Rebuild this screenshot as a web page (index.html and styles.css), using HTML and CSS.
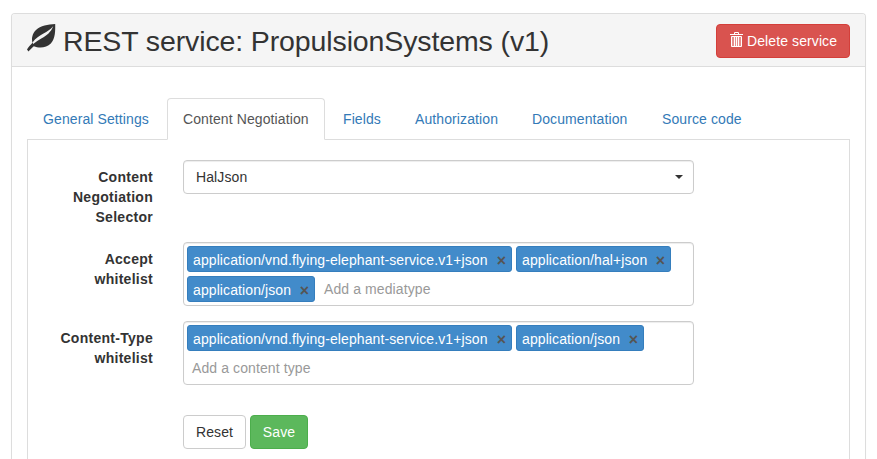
FILE: index.html
```html
<!DOCTYPE html>
<html lang="en">
<head>
<meta charset="utf-8">
<title>REST service: PropulsionSystems (v1)</title>
<link rel="stylesheet" href="styles.css">
</head>
<body>
<section class="panel">
  <header class="panel-heading">
    <svg class="leaf" viewBox="0 0 30 30" aria-hidden="true">
      <path fill="#333" d="M28.200 1C21 1.500 13.500 2.700 9 7C5.500 10.500 4.300 15 5.500 19.800C3.500 22 1.300 24.200 0 26.600L1.500 28.500C3.500 26.500 4.800 24.900 6.800 23.200C12 25.300 19.500 25 23.800 20.500C28.500 15.500 28.300 7 28.200 1Z"/>
      <path fill="#f5f5f5" d="M26.200 3.300C24 9 19.800 12.600 14.700 15.300C11.500 17 8.800 18.900 6.200 21L5.500 19.500C8.500 15 12.500 12.700 16.500 10.500C20.300 8.400 23.500 6.500 26.200 3.300Z"/>
    </svg>
    <h1 class="title">REST service: PropulsionSystems (v1)</h1>
    <button class="btn btn-danger" type="button">
      <svg class="trash" viewBox="0 0 14 16" aria-hidden="true">
        <path fill="none" stroke="#fff" d="M4.500 2V.5h4V2M0 2.500h13"/>
        <path fill="#fff" fill-opacity=".35" stroke="#fff" d="M1.500 4.500h10v10h-10zM4.500 5v9M6.500 5v9M8.500 5v9"/>
      </svg>
      <span class="delete-text">Delete service</span>
    </button>
  </header>
  <div class="panel-body">
    <nav class="tabs">
      <a class="tab tab-general">General Settings</a>
      <a class="tab tab-content active">Content Negotiation</a>
      <a class="tab tab-fields">Fields</a>
      <a class="tab tab-auth">Authorization</a>
      <a class="tab tab-docs">Documentation</a>
      <a class="tab tab-source">Source code</a>
    </nav>
    <form class="pane">
      <div class="row">
        <label class="label">Content Negotiation Selector</label>
        <div class="control select"><span>HalJson</span><i class="caret"></i></div>
      </div>
      <div class="row">
        <label class="label">Accept whitelist</label>
        <div class="control tags">
          <span class="tag tag-vnd"><span>application/vnd.flying-elephant-service.v1+json</span><b class="close">×</b></span>
          <span class="tag tag-hal"><span>application/hal+json</span><b class="close">×</b></span>
          <span class="tag tag-json"><span>application/json</span><b class="close">×</b></span>
          <span class="hint">Add a mediatype</span>
        </div>
      </div>
      <div class="row">
        <label class="label">Content-Type whitelist</label>
        <div class="control tags">
          <span class="tag tag-vnd"><span>application/vnd.flying-elephant-service.v1+json</span><b class="close">×</b></span>
          <span class="tag tag-json"><span>application/json</span><b class="close">×</b></span>
          <span class="hint">Add a content type</span>
        </div>
      </div>
      <div class="actions">
        <button class="btn btn-default" type="button">Reset</button>
        <button class="btn btn-success" type="button">Save</button>
      </div>
    </form>
  </div>
</section>
</body>
</html>
```
FILE: styles.css
```css
* { box-sizing: border-box; }
body {
  margin: 0;
  padding: 13px 11px 0;
  background: #fff;
  color: #333;
  font: 14px/20px "Nimbus Sans", "Liberation Sans", Arial, sans-serif;
  letter-spacing: .1px;
}
.panel {
  display: flex;
  flex-direction: column;
  width: 855px;
  height: 446px;
  border: 1px solid #ddd;
  border-bottom: 0;
  border-radius: 4px 4px 0 0;
  box-shadow: 0 1px 1px rgba(0, 0, 0, .05);
}
.panel-heading {
  display: flex;
  align-items: flex-start;
  flex: none;
  height: 53px;
  padding: 10px 15px 0;
  background: #f5f5f5;
  border-bottom: 1px solid #ddd;
  border-radius: 3px 3px 0 0;
}
.leaf { width: 30px; height: 30px; margin-right: 6px; flex: none; margin-top: -1px; }
.title {
  margin: 1px 0 0;
  font-size: 28.5px;
  line-height: 33px;
  font-weight: 400;
  letter-spacing: -.12px;
  white-space: nowrap;
}
.btn {
  display: flex;
  align-items: center;
  justify-content: center;
  height: 34px;
  padding: 0;
  border: 1px solid;
  border-radius: 4px;
  font: inherit;
  letter-spacing: inherit;
  white-space: nowrap;
}
.btn-danger {
  width: 134px;
  margin-left: auto;
  justify-content: flex-start;
  padding-left: 13px;
  gap: 3px;
  color: #fff;
  background: #d9534f;
  border-color: #d43f3a;
}
.trash { width: 14px; height: 16px; margin-top: -2px; }
.panel-body {
  display: flex;
  flex-direction: column;
  flex: 1;
  padding: 31px 15px 0;
}
.tabs { display: flex; flex: none; gap: 2px; height: 42px; border-bottom: 1px solid #ddd; }
.tab {
  height: 42px;
  padding: 10px 15px;
  border: 1px solid transparent;
  border-radius: 4px 4px 0 0;
  color: #337ab7;
  white-space: nowrap;
}
.tab.active { color: #555; background: #fff; border-color: #ddd #ddd #fff; }
.tab-general { width: 138px; }
.tab-content { width: 158px; }
.tab-fields { width: 70px; }
.tab-auth { width: 115px; }
.tab-docs { width: 128px; }
.tab-source { width: 112px; }
.pane {
  flex: 1;
  padding: 20px 0 0 25px;
  border: 1px solid #ddd;
  border-width: 0 1px;
}
.row { display: flex; align-items: flex-start; margin-bottom: 15px; }
.label {
  width: 100px;
  margin-right: 30px;
  padding-top: 7px;
  font-weight: 700;
  letter-spacing: .28px;
  text-align: right;
}
.control {
  width: 511px;
  border: 1px solid #ccc;
  border-radius: 4px;
  background: #fff;
  box-shadow: inset 0 1px 1px rgba(0, 0, 0, .075);
}
.select {
  display: flex;
  align-items: center;
  justify-content: space-between;
  height: 34px;
  padding: 0 10px 0 12px;
}
.caret { border: 4px solid transparent; border-top-color: #333; border-bottom: 0; }
.tags {
  display: flex;
  flex-wrap: wrap;
  align-content: flex-start;
  gap: 4px;
  height: 64px;
  padding: 3px;
}
.tag {
  display: flex;
  justify-content: space-between;
  height: 26px;
  padding: 3px 5px 0;
  color: #fff;
  background: #428bca;
  border: 1px solid #357ebd;
  border-radius: 3px;
  white-space: nowrap;
}
.tag-vnd { width: 325px; }
.tag-hal { width: 155px; }
.tag-json { width: 128px; }
.close { color: #555; font-size: 16px; line-height: 21px; letter-spacing: 0; }
.hint { padding: 3px 5px; color: #999; }
.actions { display: flex; gap: 4px; margin: 30px 0 0 130px; }
.btn-default { width: 63px; color: #333; background: #fff; border-color: #ccc; }
.btn-success { width: 58px; color: #fff; background: #5cb85c; border-color: #4cae4c; }
```
